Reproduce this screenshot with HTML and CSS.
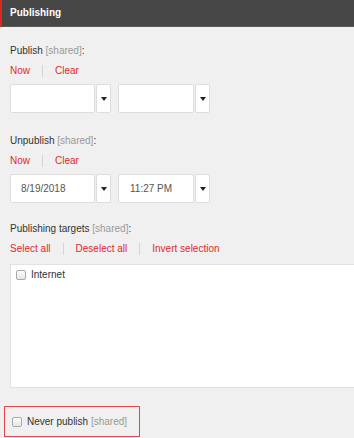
FILE: index.html
```html
<!doctype html>
<html lang="en">
<head>
    <meta charset="UTF-8">
    <title>Publishing</title>
    <link rel="stylesheet" href="styles.css">
</head>
<body>
    <div class="header">Publishing</div>

    <div class="content">
        <div class="label">Publish <span class="shared">[shared]</span>:</div>
        <div class="links">
            <a class="link">Now</a>
            <span class="sep"></span>
            <a class="link">Clear</a>
        </div>
        <div class="pickers">
            <div class="picker date">
                <div class="field"></div>
                <div class="drop"><span class="arrow"></span></div>
            </div>
            <div class="picker time">
                <div class="field"></div>
                <div class="drop"><span class="arrow"></span></div>
            </div>
        </div>

        <div class="label second">Unpublish <span class="shared">[shared]</span>:</div>
        <div class="links">
            <a class="link">Now</a>
            <span class="sep"></span>
            <a class="link">Clear</a>
        </div>
        <div class="pickers">
            <div class="picker date">
                <div class="field">8/19/2018</div>
                <div class="drop"><span class="arrow"></span></div>
            </div>
            <div class="picker time">
                <div class="field">11:27 PM</div>
                <div class="drop"><span class="arrow"></span></div>
            </div>
        </div>

        <div class="label third">Publishing targets <span class="shared">[shared]</span>:</div>
        <div class="links">
            <a class="link">Select all</a>
            <span class="sep"></span>
            <a class="link">Deselect all</a>
            <span class="sep"></span>
            <a class="link">Invert selection</a>
        </div>
        <div class="targets">
            <div class="check-row">
                <span class="check"></span>
                <span>Internet</span>
            </div>
        </div>
    </div>

    <div class="never">
        <span class="check"></span>
        <span>Never publish <span class="shared">[shared]</span></span>
    </div>
</body>
</html>
```

FILE: styles.css
```css
body{
    margin: 0;
    padding: 0;
    background: #f0f0f0;
    font-family: "Liberation Sans", Arial, sans-serif;
    font-size: 10px;
    color: #333;
    overflow: hidden;
}
.header{
    height: 26px;
    line-height: 26px;
    background: #474747;
    border-left: 2px solid #dc291e;
    border-bottom: 1px solid #5a5a5a;
    color: #fff;
    font-weight: bold;
    padding-left: 8px;
}
.content{
    padding-left: 10px;
}
.label{
    line-height: 16px;
    margin-top: 16px;
}
.label.second{
    margin-top: 20px;
}
.label.third{
    margin-top: 18px;
}
.shared{
    color: #999;
}
.links{
    display: flex;
    align-items: center;
    line-height: 16px;
    margin-top: 4px;
}
.link{
    color: #e0292a;
}
.sep{
    width: 1px;
    height: 12px;
    background: #d5d5d5;
    margin: 0 12px;
}
.pickers{
    display: flex;
    gap: 7px;
    margin-top: 5px;
}
.picker{
    display: flex;
    height: 29px;
}
.field{
    box-sizing: border-box;
    height: 29px;
    line-height: 27px;
    background: #fff;
    border: 1px solid #ddd;
    border-radius: 2px;
    padding-left: 10px;
    color: #555;
}
.date .field{
    width: 85px;
}
.time .field{
    width: 76px;
    padding-left: 11px;
}
.drop{
    box-sizing: border-box;
    width: 15px;
    height: 29px;
    margin-left: 1px;
    background: #fff;
    border: 1px solid #ddd;
    border-radius: 2px;
    display: flex;
    align-items: center;
    justify-content: center;
}
.arrow{
    width: 0;
    height: 0;
    border-left: 3px solid transparent;
    border-right: 3px solid transparent;
    border-top: 4px solid #222;
}
.targets{
    box-sizing: border-box;
    height: 124px;
    margin-top: 7px;
    margin-right: -4px;
    background: #fff;
    border: 1px solid #e2e2e2;
    padding: 4px 0 0 5px;
}
.check-row{
    display: flex;
    align-items: center;
    gap: 5px;
    line-height: 12px;
}
.check{
    box-sizing: border-box;
    flex: none;
    width: 10px;
    height: 10px;
    border: 1px solid #a9a9a9;
    border-radius: 2px;
    background: linear-gradient(#fdfdfd, #e6e6e6);
}
.never{
    display: flex;
    align-items: center;
    gap: 5px;
    box-sizing: border-box;
    width: 136px;
    height: 31px;
    margin: 18px 0 0 4px;
    padding-left: 7px;
    border: 1px solid #e0474c;
    white-space: nowrap;
}
```
